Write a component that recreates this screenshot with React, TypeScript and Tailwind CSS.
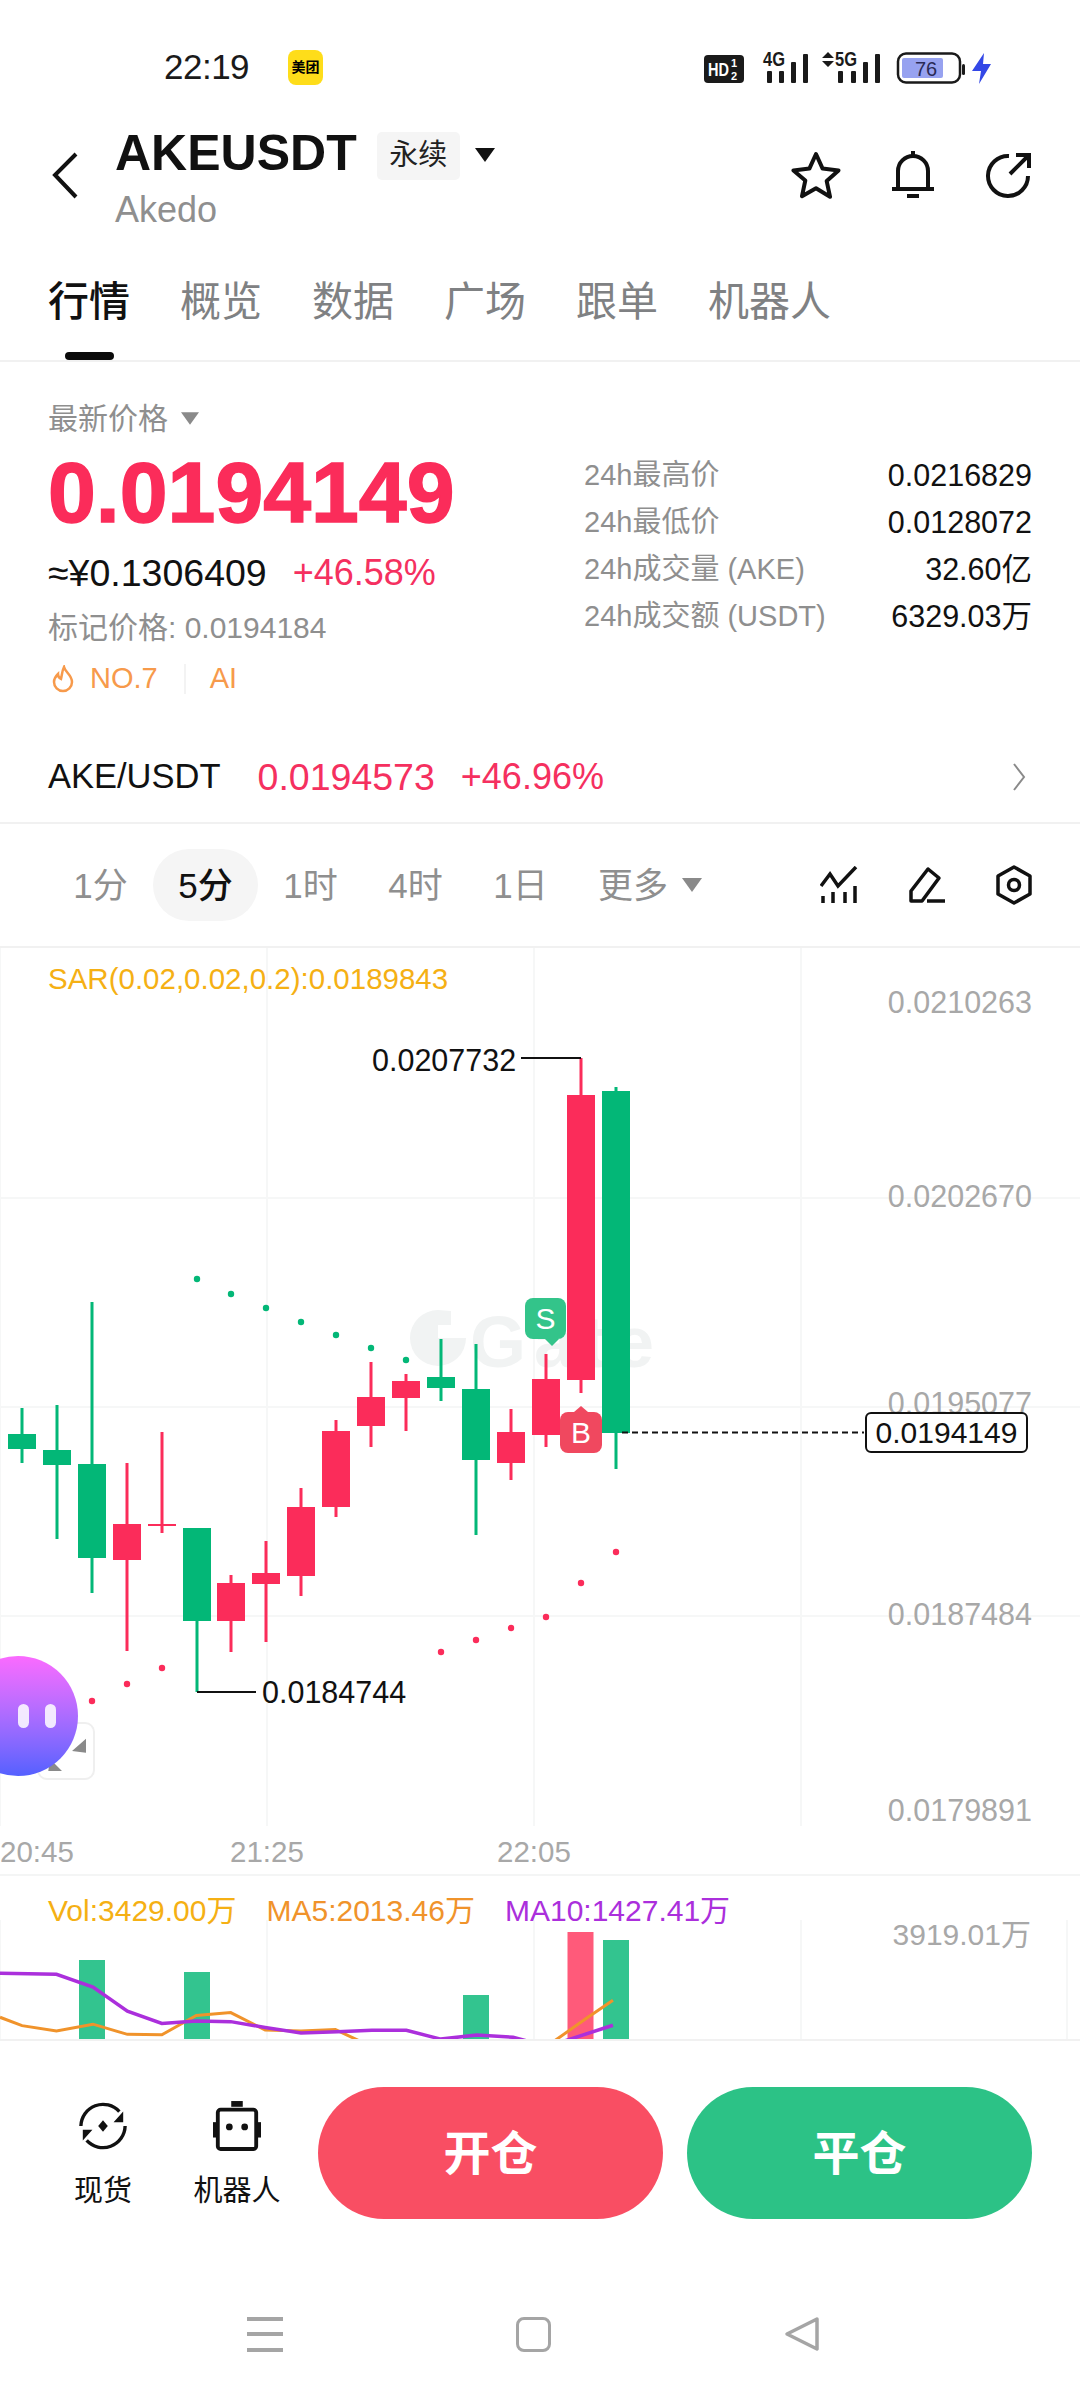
const RED = "#fb2c5a";
const GREEN = "#03b777";
// x, wickTop, wickBottom, bodyTop, bodyBottom, colour
const candles: [number, number, number, number, number, string][] = [
  [22, 1408, 1463, 1434, 1449, GREEN],
  [57, 1405, 1539, 1450, 1465, GREEN],
  [92, 1302, 1593, 1464, 1558, GREEN],
  [127, 1463, 1651, 1524, 1560, RED],
  [162, 1432, 1533, 1524, 1526, RED],
  [197, 1528, 1692, 1528, 1621, GREEN],
  [231, 1575, 1652, 1583, 1621, RED],
  [266, 1541, 1642, 1573, 1584, RED],
  [301, 1488, 1596, 1507, 1576, RED],
  [336, 1420, 1517, 1431, 1507, RED],
  [371, 1362, 1447, 1397, 1426, RED],
  [406, 1374, 1431, 1381, 1398, RED],
  [441, 1339, 1401, 1377, 1388, GREEN],
  [476, 1344, 1535, 1389, 1460, GREEN],
  [511, 1409, 1480, 1432, 1463, RED],
  [546, 1354, 1447, 1379, 1435, RED],
  [581, 1058, 1393, 1095, 1380, RED],
  [616, 1087, 1469, 1091, 1433, GREEN],
];
const greenDots = [[197, 1279], [231, 1294], [266, 1308], [301, 1322], [336, 1335], [371, 1348], [406, 1360]];
const redDots = [[92, 1701], [127, 1684], [162, 1668], [441, 1652], [476, 1640], [511, 1628], [546, 1617], [581, 1583], [616, 1552]];
const CT = 948;

function ChartGrid() {
  return (
    <svg className="absolute inset-0" width="1080" height="878" viewBox={`0 ${CT} 1080 878`}>
      {[1198, 1407, 1616].map((y) => (
        <line key={y} x1="0" x2="1080" y1={y} y2={y} stroke="#f6f7f7" strokeWidth="2" />
      ))}
      {[0, 267, 534, 801].map((x) => (
        <line key={x} x1={x} x2={x} y1={CT} y2={CT + 878} stroke="#f6f7f7" strokeWidth="2" />
      ))}
      <path d="M438 1310a28 28 0 1 0 28 28h-28v-13h13v-14z" fill="#f1f3f3" />
    </svg>
  );
}

function Chart() {
  return (
    <svg className="absolute inset-0" width="1080" height="878" viewBox={`0 ${CT} 1080 878`}>
      {candles.map(([x, a, b, c, d, col], i) => (
        <g key={i} fill={col}>
          <rect x={x - 1.5} y={a} width="3" height={b - a} />
          <rect x={x - 14} y={c} width="28" height={Math.max(d - c, 2)} />
        </g>
      ))}
      {greenDots.map(([x, y], i) => <circle key={i} cx={x} cy={y} r="3.2" fill={GREEN} />)}
      {redDots.map(([x, y], i) => <circle key={i} cx={x} cy={y} r="3.2" fill={RED} />)}
      <polyline points="521,1058 581,1058" fill="none" stroke="#111" strokeWidth="2" />
      <polyline points="197,1692 256,1692" fill="none" stroke="#111" strokeWidth="2" />
      <line x1="622" x2="864" y1="1432.5" y2="1432.5" stroke="#111" strokeWidth="2" strokeDasharray="6 4" />
      <path d="M545 1339h14l-7 7z" fill="#33c48a" />
      <path d="M574 1412l7-6 7 6z" fill="#f0485f" />
    </svg>
  );
}

function pts(a: number[][]) {
  return a.map(([x, y]) => `${x / 1.452},${y / 2.75 + 1830 - 1876}`).join(" ");
}

function VolChart() {
  return (
    <svg className="absolute left-0 top-0" width="1080" height="164" viewBox="0 0 1080 164">
      {[0, 267, 534, 801, 1067].map((x) => (
        <line key={x} x1={x} x2={x} y1="44" y2="164" stroke="#f6f7f7" strokeWidth="2" />
      ))}
      <g fill="#33c48f">
        <rect x="79" y="84" width="26" height="80" />
        <rect x="184" y="96" width="26" height="68" />
        <rect x="463" y="119" width="26" height="45" />
        <rect x="603" y="64" width="26" height="100" />
      </g>
      <rect x="567.5" y="56" width="26" height="108" fill="#ff5a7a" />
      <polyline points={pts([[0, 515], [32, 538], [82, 553], [135, 534], [185, 562], [235, 563], [285, 510], [335, 502], [385, 550], [437, 553], [487, 549], [522, 580]])} fill="none" stroke="#f0932b" strokeWidth="3" />
      <polyline points={pts([[805, 580], [850, 520], [890, 468]])} fill="none" stroke="#f0932b" strokeWidth="3" />
      <polyline points={pts([[0, 394], [82, 397], [135, 432], [185, 498], [235, 532], [285, 525], [335, 527], [385, 543], [437, 558], [490, 555], [540, 551], [590, 551], [640, 575], [692, 564], [745, 570], [765, 580]])} fill="none" stroke="#ab2fdc" strokeWidth="3.5" />
      <polyline points={pts([[820, 580], [890, 537]])} fill="none" stroke="#ab2fdc" strokeWidth="3.5" />
    </svg>
  );
}

function StatusIcons() {
  const bars = (x: number[], hs: number[]) =>
    x.map((v, i) => <rect key={v} x={v} y={83 - hs[i]} width="5" height={hs[i]} rx="1" fill="#1a1a1a" />);
  return (
    <svg width="300" height="46" viewBox="700 44 300 46" className="block">
      <rect x="704" y="55" width="40" height="28" rx="4" fill="#1a1a1a" />
      <text x="708" y="76" fontSize="19" fontWeight="700" fill="#fff" textLength="21" lengthAdjust="spacingAndGlyphs">HD</text>
      <text x="731" y="67" fontSize="11" fontWeight="700" fill="#fff">1</text>
      <text x="731" y="80" fontSize="11" fontWeight="700" fill="#fff">2</text>
      <text x="763" y="66" fontSize="20" fontWeight="700" fill="#1a1a1a" textLength="22" lengthAdjust="spacingAndGlyphs">4G</text>
      {bars([767, 779, 791, 803], [12, 12, 21, 29])}
      <path d="M822 58l6-6 6 6zM822 61l6 6 6-6z" fill="#1a1a1a" />
      <text x="835" y="66" fontSize="20" fontWeight="700" fill="#1a1a1a" textLength="22" lengthAdjust="spacingAndGlyphs">5G</text>
      {bars([838, 851, 863, 875], [12, 12, 21, 29])}
      <rect x="898" y="53.5" width="62" height="29" rx="8" fill="none" stroke="#1a1a1a" strokeWidth="2.5" />
      <rect x="902" y="58" width="41" height="20" rx="2" fill="#97a2f0" />
      <rect x="962" y="64" width="3" height="11" rx="1.5" fill="#1a1a1a" />
      <text x="915" y="76" fontSize="20" fill="#2a2a55" textLength="22">76</text>
      <path d="M984 53 972 71h9l-2 13 12-20h-8z" fill="#3347e6" />
    </svg>
  );
}

function Tri({ w, h, color }: { w: number; h: number; color: string }) {
  return (
    <svg width={w} height={h} viewBox="0 0 20 14" className="block">
      <path d="M0 0h20L10 14z" fill={color} />
    </svg>
  );
}

const tabs = ["概览", "数据", "广场", "跟单", "机器人"];
const stats = [
  ["24h最高价", "0.0216829"],
  ["24h最低价", "0.0128072"],
  ["24h成交量 (AKE)", "32.60亿"],
  ["24h成交额 (USDT)", "6329.03万"],
];
const times = ["1分", "5分", "1时", "4时", "1日"];
const axis: [string, number][] = [["0.0210263", 54], ["0.0202670", 248], ["0.0195077", 455], ["0.0187484", 666], ["0.0179891", 862]];

export default function App() {
  return (
    <div className="w-[1080px] h-[2400px] bg-white flex flex-col overflow-hidden font-['Liberation_Sans','Noto_Sans_CJK_SC',sans-serif]">
      {/* status bar */}
      <div className="h-[46px] mt-[44px] flex items-center justify-between pl-[164px] pr-[80px]">
        <div className="flex items-center">
          <span className="text-[35px] tracking-[-0.5px] text-[#1a1a1a] w-[124px]">22:19</span>
          <span className="w-[35px] h-[35px] rounded-[8px] bg-[#fedd1a] flex items-center justify-center text-[14px] font-bold text-black">美团</span>
        </div>
        <StatusIcons />
      </div>

      {/* header */}
      <div className="h-[172px] flex items-start pl-[50px] pr-[49px]">
        <svg width="30" height="48" viewBox="0 0 30 48" className="mt-[62px] block">
          <path d="M26 3 5 24l21 22" transform="translate(0 -1)" fill="none" stroke="#111" strokeWidth="4" />
        </svg>
        <div className="ml-[35px] mt-[36px] flex flex-col">
          <div className="flex items-center h-[54px]">
            <span className="text-[50px] leading-none font-bold text-[#111]">AKEUSDT</span>
            <span className="ml-[20px] mt-[6px] w-[83px] h-[48px] rounded-[5px] bg-[#f5f5f5] flex items-center justify-center text-[29px] text-[#222]">永续</span>
            <span className="ml-[15px] mt-[4px]"><Tri w={20} h={14} color="#111" /></span>
          </div>
          <span className="text-[36px] leading-none mt-[12px] text-[#8f8f8f]">Akedo</span>
        </div>
        <div className="ml-auto mt-[60px] flex items-center gap-[49px]">
          <svg width="50" height="48" viewBox="0 0 50 48" className="block">
            <path d="M25 3l6.6 14.6 15.9 1.8-11.8 10.7 3.3 15.6L25 37.200l-14 8 3.300-15.700L2.500 19.400l15.900-1.800z" fill="none" stroke="#111" strokeWidth="4" strokeLinejoin="round" />
          </svg>
          <svg width="46" height="50" viewBox="0 0 46 50" className="block">
            <path d="M8 38V21a15 15 0 0 1 30 0v17" fill="none" stroke="#111" strokeWidth="4" />
            <path d="M2 39h42" stroke="#111" strokeWidth="4" />
            <path d="M23 1v6M17 46h12" stroke="#111" strokeWidth="4" />
          </svg>
          <svg width="46" height="46" viewBox="0 0 46 46" className="block">
            <path d="M24 4A20 20 0 1 0 43 24" fill="none" stroke="#111" strokeWidth="4" />
            <path d="M25 22 43 4M31 3h13v13" fill="none" stroke="#111" strokeWidth="4" />
          </svg>
        </div>
      </div>

      {/* tabs */}
      <div className="h-[100px] border-b-2 border-[#f1f1f1] pl-[48px] flex items-start">
        <div className="flex flex-col items-center w-[82px]">
          <span className="text-[41px] leading-[58px] mt-[11px] text-[#111] font-medium">行情</span>
          <span className="w-[49px] h-[8px] mt-[21px] rounded-full bg-[#0a0a0a]" />
        </div>
        {tabs.map((t) => (
          <span key={t} className="ml-[50px] text-[41px] leading-[58px] mt-[11px] text-[#7f8183]">{t}</span>
        ))}
      </div>

      {/* price block */}
      <div className="h-[460px] flex pl-[48px] pr-[48px]">
        <div className="flex flex-col w-[536px]">
          <div className="flex items-center h-[40px] mt-[36px]">
            <span className="text-[30px] text-[#8f8f8f]">最新价格</span>
            <span className="ml-[13px]"><Tri w={18} h={13} color="#8a8a8a" /></span>
          </div>
          <span className="text-[86px] leading-[90px] mt-[9px] font-bold text-[#fb2c5a] [-webkit-text-stroke:1.5px_#fb2c5a]">0.0194149</span>
          <div className="flex items-center h-[44px] mt-[14px]">
            <span className="text-[37.5px] text-[#111]">≈¥0.1306409</span>
            <span className="ml-[26px] text-[36px] text-[#f5305f]">+46.58%</span>
          </div>
          <span className="text-[30px] leading-[40px] mt-[13px] text-[#8f8f8f]">标记价格: 0.0194184</span>
          <div className="flex items-center h-[40px] mt-[11px]">
            <svg width="22" height="28" viewBox="0 0 22 28" className="ml-[4px] block">
              <path d="M12 2c1 5 8 8 8 15a9 9 0 0 1-18 0c0-4 2-6 4-8 0 3 1 4 3 5 1-4 1-8 3-12z" fill="none" stroke="#f79a4b" strokeWidth="2.500" />
            </svg>
            <span className="ml-[16px] text-[29px] text-[#f79a4b]">NO.7</span>
            <span className="ml-[26px] w-[2px] h-[30px] bg-[#f3f3f3]" />
            <span className="ml-[24px] text-[29px] text-[#f79a4b]">AI</span>
          </div>
        </div>
        <div className="flex-1 flex flex-col gap-[7px] mt-[94px]">
          {stats.map(([k, v]) => (
            <div key={k} className="flex justify-between items-center h-[40px]">
              <span className="text-[29px] text-[#8f8f8f]">{k}</span>
              <span className="text-[30.5px] text-[#111]">{v}</span>
            </div>
          ))}
        </div>
      </div>

      {/* spot row */}
      <div className="-mt-[68px] h-[70px] border-b-2 border-[#f1f1f1] flex items-start pl-[48px] pr-[54px]">
        <div className="h-[46px] flex items-center w-full">
          <span className="text-[34.5px] text-[#111]">AKE/USDT</span>
          <span className="ml-[37px] text-[37.5px] text-[#f5305f]">0.0194573</span>
          <span className="ml-[26px] text-[36px] text-[#f5305f]">+46.96%</span>
          <svg width="14" height="30" viewBox="0 0 14 30" className="ml-auto block">
            <path d="M2 2l10 13L2 28" fill="none" stroke="#8a8a8a" strokeWidth="2" />
          </svg>
        </div>
      </div>

      {/* time row */}
      <div className="h-[122px] flex items-center pl-[48px] pr-[48px]">
        {times.map((t, i) => (
          <span key={t} className={`w-[105px] h-[72px] flex items-center justify-center text-[35px] pt-[2px] ${i === 1 ? "bg-[#f5f5f5] rounded-[36px] text-[#111] font-medium" : "text-[#8f8f8f]"}`}>{t}</span>
        ))}
        <span className="ml-[25px] pt-[2px] text-[35px] text-[#8f8f8f]">更多</span>
        <span className="ml-[14px]"><Tri w={20} h={14} color="#8a8a8a" /></span>
        <div className="ml-auto flex items-center gap-[50px]">
          <svg width="38" height="38" viewBox="0 0 38 38" className="block">
            <path d="M1 20 10 8l8 12L36 1" fill="none" stroke="#111" strokeWidth="3.500" />
            <path d="M3 30v7M13 26v11M25 26v11M35 20v17" stroke="#111" strokeWidth="3.500" />
          </svg>
          <svg width="38" height="38" viewBox="0 0 38 38" className="block">
            <path d="M3 25 20 3l11 9-17 23H3z" fill="none" stroke="#111" strokeWidth="3.500" strokeLinejoin="round" />
            <path d="M19 35h18" stroke="#111" strokeWidth="3.500" />
          </svg>
          <svg width="36" height="40" viewBox="0 0 36 40" className="block">
            <path d="M18 2l16 9v18l-16 9-16-9V11z" fill="none" stroke="#111" strokeWidth="3.500" strokeLinejoin="round" />
            <circle cx="18" cy="20" r="5.500" fill="none" stroke="#111" strokeWidth="3.500" />
          </svg>
        </div>
      </div>

      {/* candle chart */}
      <div className="relative h-[880px] border-t-2 border-[#f1f1f1] overflow-hidden">
        <ChartGrid />
        <span className="absolute left-[470px] top-[358px] text-[72px] leading-none font-bold tracking-[8px] text-[#f1f3f3]">Gate</span>
        <Chart />
        <span className="absolute left-[48px] top-[13px] text-[29.5px] leading-[36px] text-[#f5b014]">SAR(0.02,0.02,0.2):0.0189843</span>
        {axis.map(([v, t]) => (
          <span key={v} style={{ top: t - 18 }} className="absolute right-[48px] text-[30.5px] leading-[36px] text-[#a8a8a8]">{v}</span>
        ))}
        <span className="absolute left-[372px] top-[94px] text-[30.5px] leading-[36px] text-[#111]">0.0207732</span>
        <span className="absolute left-[262px] top-[726px] text-[30.5px] leading-[36px] text-[#111]">0.0184744</span>
        <span className="absolute left-[865px] top-[464px] w-[163px] h-[41px] bg-white border-2 border-[#111] rounded-[6px] flex items-center justify-center text-[30px] text-[#111]">0.0194149</span>
        <span className="absolute left-[525px] top-[350px] w-[41px] h-[41px] rounded-[8px] bg-[#33c48a] flex items-center justify-center text-[30px] text-white">S</span>
        <span className="absolute left-[560px] top-[464px] w-[42px] h-[41px] rounded-[8px] bg-[#f0485f] flex items-center justify-center text-[30px] text-white">B</span>
        <div className="absolute left-[37px] top-[774px] w-[58px] h-[58px] rounded-[10px] border-2 border-[#efefef] bg-white flex items-center justify-center">
          <svg width="40" height="40" viewBox="0 0 40 40" className="block">
            <path d="M42 6v16l-16-2zM2 42l2-14 14 14z" fill="#8a8a8a" />
          </svg>
        </div>
        <div className="absolute -left-[42px] top-[708px] w-[120px] h-[120px] rounded-[60px] bg-gradient-to-b from-[#fb6aff] to-[#5460ff] flex items-center justify-end gap-[16px] pr-[22px]">
          <span className="w-[11px] h-[24px] rounded-full bg-white/85" />
          <span className="w-[11px] h-[24px] rounded-full bg-white/85" />
        </div>
      </div>

      {/* x axis */}
      <div className="h-[50px] pt-[5px] border-b-2 border-[#f4f5f5] flex items-center text-[29.5px] text-[#a8a8a8]">
        <span className="w-[230px]">20:45</span>
        <span className="w-[267px]">21:25</span>
        <span>22:05</span>
      </div>

      {/* volume */}
      <div className="relative h-[165px] border-b-2 border-[#f1f1f1] overflow-hidden">
        <VolChart />
        <div className="absolute left-[48px] top-[17px] flex text-[30px] leading-[36px]">
          <span className="text-[#f5b014]">Vol:3429.00万</span>
          <span className="ml-[30px] text-[#f0932b]">MA5:2013.46万</span>
          <span className="ml-[30px] text-[#ab2fdc]">MA10:1427.41万</span>
        </div>
        <span className="absolute right-[49px] top-[41px] text-[30px] leading-[36px] text-[#a8a8a8]">3919.01万</span>
      </div>

      {/* action bar */}
      <div className="h-[180px] pt-[46px] flex items-start pr-[48px]">
        <div className="w-[318px] flex">
          <div className="w-[100px] ml-[53px] flex flex-col items-center pt-[14px]">
            <svg width="50" height="50" viewBox="0 0 52 52" className="block">
              <path d="M3 26a23 23 0 0 1 40-15M49 26a23 23 0 0 1-40 15" fill="none" stroke="#111" strokeWidth="3.500" />
              <path d="M47 11v11H37zM5 41V30h10z" fill="#111" />
              <path d="M26 20l5 6-5 6-5-6z" fill="#111" />
            </svg>
            <span className="text-[29px] leading-[36px] mt-[22px] text-[#111]">现货</span>
          </div>
          <div className="w-[100px] ml-[34px] flex flex-col items-center pt-[14px]">
            <svg width="48" height="50" viewBox="0 0 50 52" className="block">
              <rect x="19" y="0" width="12" height="6" fill="#111" />
              <rect x="5" y="9" width="40" height="41" rx="3" fill="none" stroke="#111" strokeWidth="4" />
              <rect x="0" y="22" width="4" height="16" fill="#111" />
              <rect x="46" y="22" width="4" height="16" fill="#111" />
              <circle cx="17" cy="27" r="3.500" fill="#111" />
              <circle cx="33" cy="27" r="3.500" fill="#111" />
            </svg>
            <span className="text-[29px] leading-[36px] mt-[22px] whitespace-nowrap text-[#111]">机器人</span>
          </div>
        </div>
        <div className="w-[345px] h-[132px] pt-[3px] rounded-full bg-[#f94e63] flex items-center justify-center text-[47px] font-bold text-white">开仓</div>
        <div className="ml-[24px] w-[345px] h-[132px] pt-[3px] rounded-full bg-[#2cc286] flex items-center justify-center text-[47px] font-bold text-white">平仓</div>
      </div>

      {/* nav bar */}
      <div className="flex items-start justify-center pt-[95px] pr-[14px]">
        <div className="flex items-center gap-[233px]">
          <div className="w-[36px] h-[35px] flex flex-col justify-between">
            <span className="h-[4px] bg-[#a5a5a5]" />
            <span className="h-[4px] bg-[#a5a5a5]" />
            <span className="h-[4px] bg-[#a5a5a5]" />
          </div>
          <span className="w-[35px] h-[35px] rounded-[8px] border-[3.5px] border-[#a5a5a5]" />
          <svg width="36" height="36" viewBox="0 0 36 36" className="block">
            <path d="M33 3 3 18l30 15z" fill="none" stroke="#a5a5a5" strokeWidth="3.500" strokeLinejoin="round" />
          </svg>
        </div>
      </div>
    </div>
  );
}
